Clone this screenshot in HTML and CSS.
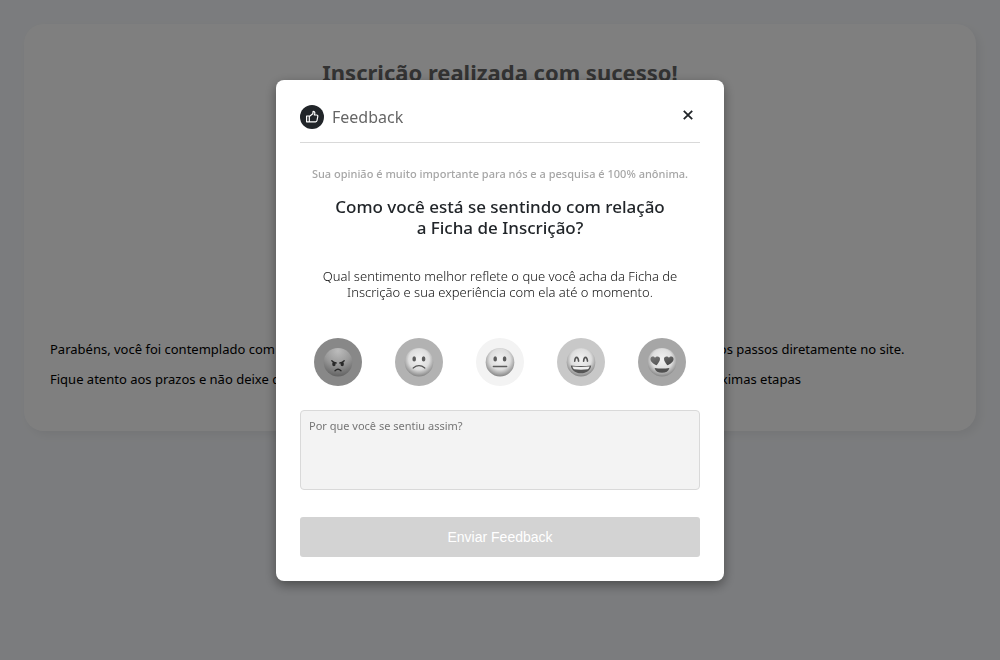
FILE: index.html
```html
<!DOCTYPE html>
<html lang="pt-BR">
<head>
<meta charset="utf-8">
<meta name="viewport" content="width=device-width, initial-scale=1">
<title>Feedback</title>
<link rel="stylesheet" href="styles.css">
</head>
<body>
<main class="page">
  <section class="card">
    <h1 class="card-title">Inscrição realizada com sucesso!</h1>
    <div class="card-text">
      <p>Parabéns, você foi contemplado com uma bolsa de estudos. Agora você já pode acompanhar todos os próximos passos diretamente no site.</p>
      <p>Fique atento aos prazos e não deixe de entregar todos os seus documentos solicitados para participar das próximas etapas</p>
    </div>
  </section>
</main>

<div class="overlay">
  <div class="modal" role="dialog" aria-modal="true" aria-labelledby="modal-title">
    <header class="modal-header">
      <svg class="brand" viewBox="0 0 24 24" aria-hidden="true">
        <circle cx="12" cy="12" r="12" fill="#212529"/>
        <path d="M6.6 11h2.7v5.8H6.6zM9.3 11.4 12.8 8.8 13.1 6.3q1.9 0 1.7 2.1L14.3 10h2.4q1.2 0 1.1 1.3l-.8 4.2q-.2 1.3-1.4 1.3H9.3" fill="none" stroke="#fff" stroke-width="1.2" stroke-linejoin="round"/>
      </svg>
      <h2 class="modal-title" id="modal-title">Feedback</h2>
      <button class="close" type="button" aria-label="Fechar">
        <svg viewBox="0 0 10 10" aria-hidden="true"><path d="M.8.8l8.4 8.4M9.2.8.8 9.2" stroke="#212529" stroke-width="1.8"/></svg>
      </button>
    </header>

    <form class="form">
      <p class="note">Sua opinião é muito importante para nós e a pesquisa é 100% anônima.</p>
      <h3 class="question">Como você está se sentindo com relação<br>a Ficha de Inscrição?</h3>
      <p class="description">Qual sentimento melhor reflete o que você acha da Ficha de<br>Inscrição e sua experiência com ela até o momento.</p>

      <svg class="defs" width="0" height="0" aria-hidden="true">
        <defs>
          <radialGradient id="dark" cx=".5" cy=".1" r=".95"><stop offset="0" stop-color="#bcbcbc"/><stop offset=".5" stop-color="#999"/><stop offset="1" stop-color="#5c5c5c"/></radialGradient>
          <radialGradient id="light" cx=".5" cy=".4" r=".6"><stop offset="0" stop-color="#f2f2f2"/><stop offset=".6" stop-color="#dedede"/><stop offset="1" stop-color="#858585"/></radialGradient>
          <linearGradient id="heart" x2="1" y2="1"><stop offset="0" stop-color="#777"/><stop offset="1" stop-color="#444"/></linearGradient>
        </defs>
      </svg>

      <div class="moods" role="group" aria-label="Sentimento">
        <button class="mood mood-angry" type="button" aria-label="Muito insatisfeito">
          <svg viewBox="0 0 48 48" aria-hidden="true">
            <circle cx="24" cy="24.2" r="14.3" fill="url(#dark)"/>
            <g fill="#292929"><ellipse cx="19.9" cy="26" rx="1.7" ry="2.2"/><ellipse cx="28.2" cy="26" rx="1.7" ry="2.2"/></g>
            <path d="M17.8 22.8q2 2 4.4 2.2M30.2 22.8q-2 2-4.4 2.2M21 32.8q3-3 6 0" fill="none" stroke="#292929" stroke-width="1.3" stroke-linecap="round"/>
          </svg>
        </button>
        <button class="mood mood-sad" type="button" aria-label="Insatisfeito">
          <svg viewBox="0 0 48 48" aria-hidden="true">
            <circle cx="24" cy="24.2" r="14.3" fill="url(#light)"/>
            <g fill="#5c5c5c"><ellipse cx="19.2" cy="20.9" rx="1.8" ry="2.6"/><ellipse cx="28.6" cy="20.9" rx="1.8" ry="2.6"/></g>
            <path d="M18.2 30q5.8-4.6 11.6 0" fill="none" stroke="#555" stroke-width="1.3" stroke-linecap="round"/>
          </svg>
        </button>
        <button class="mood mood-neutral" type="button" aria-label="Neutro">
          <svg viewBox="0 0 48 48" aria-hidden="true">
            <circle cx="24" cy="24.2" r="14.3" fill="url(#light)"/>
            <g fill="#5c5c5c"><ellipse cx="19.2" cy="20.9" rx="1.8" ry="2.6"/><ellipse cx="28.6" cy="20.9" rx="1.8" ry="2.6"/></g>
            <path d="M17.4 28.5h13.2" stroke="#5c5c5c" stroke-width="1.5" stroke-linecap="round"/>
          </svg>
        </button>
        <button class="mood mood-happy" type="button" aria-label="Satisfeito">
          <svg viewBox="0 0 48 48" aria-hidden="true">
            <circle cx="24" cy="24.2" r="14.3" fill="url(#light)"/>
            <path d="M17.7 23.2q.3-3.8 1.9-3.8t2 3.8M26.6 23.2q.3-3.8 1.9-3.8t2 3.8" fill="none" stroke="#555" stroke-width="1.6" stroke-linecap="round"/>
            <path d="M13.8 27.4q10.2 1 20.4 0c-.6 4.9-4.7 7.8-10.2 7.8s-9.6-2.9-10.2-7.8z" fill="#555"/>
            <path d="M15.4 28.5q8.6.8 17.2 0-.4 2.4-1.8 2.7-6.8.9-13.6 0-1.4-.3-1.8-2.7z" fill="#f0f0f0"/>
          </svg>
        </button>
        <button class="mood mood-love" type="button" aria-label="Muito satisfeito">
          <svg viewBox="0 0 48 48" aria-hidden="true">
            <circle cx="24" cy="24.2" r="14.3" fill="url(#light)"/>
            <path d="M18.7 27.3c-3.8-1.7-6.7-4-6.2-6.8.5-2.4 3.4-2.6 4.5-.7 1.5-2.2 4.7-1.7 5 .8.2 2.2-1.5 4.3-3.3 6.7zM29.3 27.3c3.8-1.7 6.7-4 6.2-6.8-.5-2.4-3.4-2.6-4.5-.7-1.5-2.2-4.7-1.7-5 .8-.2 2.2 1.5 4.3 3.3 6.7z" fill="url(#heart)"/>
            <path d="M16.6 30q7.4 1 14.8 0c-.8 3.3-3.6 4.8-7.4 4.8s-6.6-1.5-7.4-4.8z" fill="#505050"/>
          </svg>
        </button>
      </div>

      <textarea class="reason" aria-label="Por que você se sentiu assim?" placeholder="Por que você se sentiu assim?"></textarea>
      <button class="submit" type="submit" disabled>Enviar Feedback</button>
    </form>
  </div>
</div>
</body>
</html>
```
FILE: styles.css
```css
* {
  box-sizing: border-box;
}

body {
  margin: 0;
  background: #f7f9fc;
  color: #000;
  font-family: "Noto Sans", "Open Sans", sans-serif;
}

h1, h2, h3, p {
  margin: 0;
}

button, textarea {
  font: inherit;
}

.page {
  padding: 24px;
}

.card {
  display: flex;
  flex-direction: column;
  gap: 247px;
  padding: 33px 26px 37px;
  border-radius: 20px;
  background: #fff;
  box-shadow: 4px 4px 10px rgba(0, 0, 0, 0.06);
}

.card-title {
  color: #666;
  font-size: 22px;
  font-weight: 700;
  line-height: 30px;
  text-align: center;
}

.card-text {
  font-size: 13px;
  line-height: 30px;
  white-space: nowrap;
}

.overlay {
  position: fixed;
  inset: 0;
  display: flex;
  align-items: center;
  justify-content: center;
  background: rgba(0, 0, 0, 0.5);
}

.modal {
  width: 100%;
  max-width: 448px;
  padding: 25px 24px 24px;
  border-radius: 8px;
  background: #fff;
  box-shadow: 0 4px 12px rgba(0, 0, 0, 0.4);
  color: #212529;
}

.modal-header {
  display: flex;
  align-items: center;
  gap: 8px;
  padding-bottom: 13px;
  border-bottom: 1px solid #d9d9d9;
}

.brand {
  width: 24px;
  height: 24px;
}

.modal-title {
  flex: 1;
  color: #666;
  font-size: 16px;
  font-weight: 400;
  line-height: 24px;
}

.close {
  display: flex;
  align-self: flex-start;
  padding: 5px 7px;
  border: 0;
  background: none;
}

.close svg {
  width: 10px;
  height: 10px;
}

.form {
  display: flex;
  flex-direction: column;
  padding-top: 23px;
  text-align: center;
}

.note {
  color: #a6a6a6;
  font-size: 11px;
  font-weight: 500;
  line-height: 16px;
}

.question {
  margin-top: 14px;
  font-size: 17px;
  font-weight: 500;
  line-height: 21px;
}

.description {
  margin-top: 30px;
  color: #111;
  font-size: 13px;
  font-weight: 300;
  line-height: 16px;
}

.defs {
  position: absolute;
}

.moods {
  display: flex;
  justify-content: space-between;
  margin-top: 38px;
  padding: 0 14px;
}

.mood {
  width: 48px;
  height: 48px;
  padding: 0;
  border: 0;
  border-radius: 50%;
}

.mood svg {
  display: block;
}

.mood-angry { background: #888; }
.mood-sad { background: #b2b2b2; }
.mood-neutral { background: #f3f3f3; }
.mood-happy { background: #c8c8c8; }
.mood-love { background: #a6a6a6; }

.reason {
  width: 100%;
  height: 80px;
  margin-top: 24px;
  padding: 7px 8px;
  border: 1px solid #d9d9d9;
  border-radius: 4px;
  background: #f3f3f3;
  font-size: 11px;
  line-height: 16px;
  resize: none;
}

.reason::placeholder {
  color: #757575;
}

.submit {
  margin-top: 27px;
  padding: 10px;
  border: 0;
  border-radius: 3px;
  background: #d3d3d3;
  color: #fff;
  font-family: "Liberation Sans", sans-serif;
  font-size: 14px;
  line-height: 20px;
}
```
